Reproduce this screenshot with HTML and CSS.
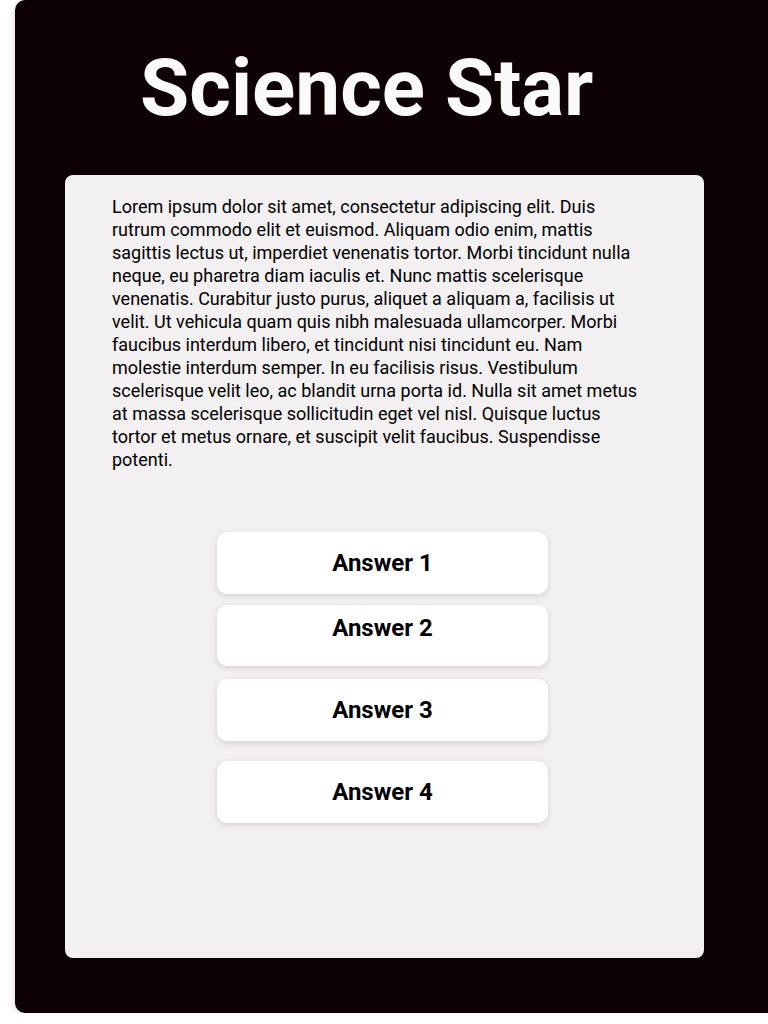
FILE: index.html
```html
<!DOCTYPE html>
<html lang="en">
<head>
<meta charset="utf-8">
<title>Science Star</title>
<link rel="stylesheet" href="styles.css">
</head>
<body>
<div class="page">
  <main class="card">
    <h1 class="title">Science Star</h1>
    <section class="panel">
      <p class="question">Lorem ipsum dolor sit amet, consectetur adipiscing elit. Duis rutrum commodo elit et euismod. Aliquam odio enim, mattis sagittis lectus ut, imperdiet venenatis tortor. Morbi tincidunt nulla neque, eu pharetra diam iaculis et. Nunc mattis scelerisque venenatis. Curabitur justo purus, aliquet a aliquam a, facilisis ut velit. Ut vehicula quam quis nibh malesuada ullamcorper. Morbi faucibus interdum libero, et tincidunt nisi tincidunt eu. Nam molestie interdum semper. In eu facilisis risus. Vestibulum scelerisque velit leo, ac blandit urna porta id. Nulla sit amet metus at massa scelerisque sollicitudin eget vel nisl. Quisque luctus tortor et metus ornare, et suscipit velit faucibus. Suspendisse potenti.</p>
      <div class="answers">
        <button class="answer answer-1">Answer 1</button>
        <button class="answer answer-2">Answer 2</button>
        <button class="answer answer-3">Answer 3</button>
        <button class="answer answer-4">Answer 4</button>
      </div>
    </section>
  </main>
</div>
</body>
</html>
```

FILE: styles.css
```css
html, body {
  margin: 0;
  padding: 0;
  background: #ffffff;
  overflow: hidden;
  font-family: Roboto, "Liberation Sans", Arial, sans-serif;
}

.page {
  padding-left: 15px;
  width: 800px;
}

.card {
  width: 768px;
  height: 1013px;
  background: #0e0103;
  border-radius: 10px;
  box-shadow: 0 2px 10px rgba(0, 0, 0, 0.14);
  padding-top: 48px;
  box-sizing: border-box;
  display: flex;
  flex-direction: column;
}

.title {
  margin: 0;
  padding-left: 125px;
  font-size: 80px;
  line-height: 80px;
  font-weight: 700;
  color: #fafafa;
}

.panel {
  margin-top: 47px;
  margin-left: 50px;
  width: 639px;
  height: 783px;
  background: #f2f0f1;
  border-radius: 8px;
  padding-top: 20px;
  box-sizing: border-box;
}

.question {
  margin: 0 0 0 47px;
  width: 530px;
  font-size: 18px;
  line-height: 23px;
  color: #000000;
}

.answers {
  margin-top: 61px;
  margin-left: 152px;
  display: flex;
  flex-direction: column;
  width: 331px;
}

.answer {
  height: 62px;
  border: none;
  border-radius: 10px;
  background: #ffffff;
  box-shadow: 0 2px 6px rgba(0, 0, 0, 0.13);
  font-family: Roboto, "Liberation Sans", Arial, sans-serif;
  font-size: 24px;
  line-height: 28px;
  font-weight: 700;
  color: #000000;
  padding: 0;
  display: flex;
  align-items: center;
  justify-content: center;
}

.answer-2 {
  margin-top: 11px;
  height: 61px;
  align-items: flex-start;
  padding-top: 9px;
}

.answer-3 {
  margin-top: 13px;
}

.answer-4 {
  margin-top: 20px;
}
```
